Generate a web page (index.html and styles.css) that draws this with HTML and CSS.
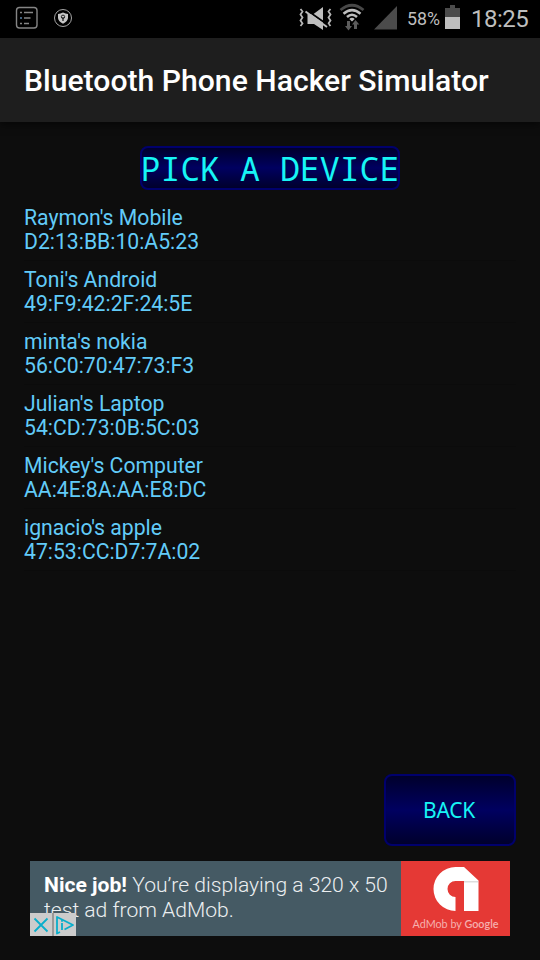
FILE: index.html
```html
<!DOCTYPE html>
<html lang="en">
<head>
<meta charset="UTF-8">
<title>Bluetooth Phone Hacker Simulator</title>
<link rel="stylesheet" href="styles.css">
</head>
<body>
	<div class="statusbar">
		<svg class="ico_list" width="24" height="24" viewBox="0 0 24 24" fill="none" stroke="#858585">
			<rect x="1.5" y="1.5" width="20.5" height="20.5" rx="3" stroke-width="1.4"/>
			<path d="M9 6.500h9M9 12h6.500M9 17.500h5" stroke-width="1.5"/>
			<path d="M5 6.500h2M5 17.500h2" stroke-width="1.5"/>
			<path d="M5 12h2" stroke="#5783ad" stroke-width="1.5"/>
		</svg>
		<svg class="ico_shield" width="20" height="20" viewBox="0 0 20 20">
			<circle cx="10" cy="10" r="8.500" fill="none" stroke="#a5a5a5"/>
			<path d="M10 4.500Q12.500 5.900 15 5.900V10Q14.500 13.500 10 15.800Q5.500 13.500 5 10V5.900Q7.500 5.900 10 4.500Z" fill="#c6c6c6"/>
			<circle cx="10" cy="8.800" r="1.700" fill="none" stroke="#222"/>
			<path d="M10 9v4" stroke="#222" stroke-width="1.300"/>
		</svg>
		<span class="espace"></span>
		<svg class="ico_mute" width="36" height="28" viewBox="0 0 36 28">
			<path d="M2.500 5l2 2.500-2 3 2 3-2 3 2 3-2 2.500M32.500 5l-2 2.500 2 3-2 3 2 3-2 3 2 2.500" fill="none" stroke="#b5b5b5" stroke-width="1.800"/>
			<path d="M9.500 10h6L25 3v23l-9-6H9.500z" fill="#bebebe"/>
			<path d="M10 7L30 21" stroke="#000" stroke-width="1.800"/>
			<path d="M7.500 7.500L29 23" stroke="#bebebe" stroke-width="2"/>
		</svg>
		<svg class="ico_wifi" width="26" height="28" viewBox="0 0 26 28" fill="none">
			<path d="M1.500 7Q13-2.500 24.500 7" stroke="#484848" stroke-width="2.800"/>
			<path d="M4.500 10.700Q13 3.500 21.500 10.700M8 14Q13 9.500 18 14" stroke="#bebebe" stroke-width="2.500"/>
			<path d="M10.300 16Q13 13.500 15.700 16L13 18.500z" fill="#bebebe"/>
			<path d="M8 18h3v5h2l-3.500 4.500L6 23h2zM15 26h3v-4.500h2.300L16.500 17 13 21.500h2z" fill="#5c5c5c"/>
		</svg>
		<svg class="ico_signal" width="24" height="24" viewBox="0 0 24 24"><path d="M0 23.500L23 0v23.500z" fill="#4b4b4b"/></svg>
		<span class="pourcent">58%</span>
		<svg class="ico_batterie" width="15" height="24" viewBox="0 0 15 24">
			<path d="M5 0h5v3h5v9H0V3h5z" fill="#4b4b4b"/>
			<path d="M0 12h15v12H0z" fill="#bebebe"/>
		</svg>
		<span class="heure">18:25</span>
	</div>

	<div class="titre">Bluetooth Phone Hacker Simulator</div>

	<div class="contenu">
		<h1 class="choix">PICK A DEVICE</h1>
		<ul class="liste">
			<li>Raymon's Mobile<br>D2:13:BB:10:A5:23</li>
			<li>Toni's Android<br>49:F9:42:2F:24:5E</li>
			<li>minta's nokia<br>56:C0:70:47:73:F3</li>
			<li>Julian's Laptop<br>54:CD:73:0B:5C:03</li>
			<li>Mickey's Computer<br>AA:4E:8A:AA:E8:DC</li>
			<li>ignacio's apple<br>47:53:CC:D7:7A:02</li>
		</ul>
		<button class="retour">BACK</button>
	</div>

	<div class="pub">
		<p class="pub_texte"><b>Nice job!</b> You’re displaying a 320 x 50<br>test ad from AdMob.</p>
		<div class="pub_logo">
			<svg width="46" height="46" viewBox="0 0 46 46">
				<path d="M22.500 1H31L45.500 14.500V45H31V15H22.500A8 8 0 0 0 22.500 31V45A22 22 0 0 1 22.500 1Z" fill="#fff"/>
				<path d="M31 15h14v1.500H31z" fill="#ddd"/>
			</svg>
			<span>AdMob by <b>Google</b></span>
		</div>
		<div class="pub_badges">
			<svg width="22" height="22" viewBox="0 0 22 22"><path d="M4.500 5l13 13M17.500 5l-13 13" stroke="#09aecb" stroke-width="1.800"/></svg>
			<svg width="22" height="22" viewBox="0 0 22 22" fill="none" stroke="#09aecb" stroke-width="1.800">
				<path d="M6 18.500L3 20V3.500L19 11.500L10.500 16" stroke-linejoin="round"/>
				<path d="M8 9.500v7M8 6.500v1.700"/>
			</svg>
		</div>
	</div>
</body>
</html>
```

FILE: styles.css
```css
html
{
	height : 100%;
}

body
{
	margin : 0;
	height : 960px;
	display : flex;
	flex-direction : column;
	overflow : hidden;
	background : #0d0d0d;
	font-family : Roboto, sans-serif;
}

.statusbar
{
	height : 38px;
	box-sizing : border-box;
	padding : 0 12px 0 15px;
	display : flex;
	align-items : flex-start;
	background : #000;
	color : #bebebe;
	white-space : nowrap;
}

.ico_list
{
	margin : 6px 14px 0 0;
}

.ico_shield
{
	margin-top : 8px;
}

.espace
{
	flex : 1;
}

.ico_mute
{
	margin : 4px 5px 0 0;
}

.ico_wifi
{
	margin : 3px 9px 0 0;
}

.ico_signal
{
	margin : 6px 9px 0 0;
}

.pourcent
{
	width : 38px;
	font-size : 17.8px;
	line-height : 38px;
}

.ico_batterie
{
	margin : 5px 11px 0 0;
}

.heure
{
	width : 57px;
	font-size : 24px;
	letter-spacing : -0.5px;
	line-height : 38px;
}

.titre
{
	height : 84px;
	padding-left : 24px;
	background : #1e1e1e;
	color : #fff;
	font-size : 30.15px;
	font-weight : 500;
	line-height : 85px;
	white-space : nowrap;
	box-shadow : 0 2px 8px rgba(0,0,0,0.6);
}

.contenu
{
	flex : 1;
	padding : 24px 24px 15px;
	display : flex;
	flex-direction : column;
}

.choix, .retour
{
	box-sizing : border-box;
	border : 2px solid #00006c;
	border-radius : 8px;
	background : linear-gradient(to bottom, #00002c, #000060 50%, #00002c);
	color : #17f5f5;
	font-weight : normal;
}

.choix
{
	align-self : center;
	width : 260px;
	height : 44px;
	margin : 0 0 9px;
	display : flex;
	justify-content : center;
	font-family : "Noto Sans Mono", "DejaVu Sans Mono", monospace;
	font-size : 33.2px;
	line-height : 41px;
	white-space : nowrap;
}

.liste
{
	list-style : none;
	margin : 0;
	padding : 0;
	color : #62cbf8;
	font-size : 21.2px;
	line-height : 24px;
}

.liste li
{
	height : 48px;
	padding : 7px 0 6px;
	border-bottom : 1px solid #0b0b0b;
}

.retour
{
	align-self : flex-end;
	margin : auto 0 0;
	width : 132px;
	height : 72px;
	padding : 0 3px 0 1px;
	font-family : "Noto Sans", sans-serif;
	font-size : 21px;
	letter-spacing : -0.2px;
}

.pub
{
	position : relative;
	width : 480px;
	height : 75px;
	margin : 0 30px 24px;
	display : flex;
	background : #455a64;
}

.pub_texte
{
	width : 371px;
	margin : 0;
	padding : 11px 0 0 14px;
	box-sizing : border-box;
	color : #eceff1;
	font-size : 21.1px;
	font-weight : 300;
	line-height : 25px;
	white-space : nowrap;
}

.pub_texte b
{
	font-weight : 700;
	color : #fff;
}

.pub_logo
{
	flex : 1;
	display : flex;
	flex-direction : column;
	align-items : center;
	padding-top : 5px;
	background : #e53935;
}

.pub_logo span
{
	margin-top : 5px;
	color : #f5b0ae;
	font-family : Lato, sans-serif;
	font-size : 10.8px;
	line-height : 14px;
	white-space : nowrap;
}

.pub_logo b
{
	font-weight : 600;
}

/* les deux petits boutons par dessus le texte */
.pub_badges
{
	position : absolute;
	left : 0;
	bottom : 0;
	height : 23px;
	display : flex;
	gap : 2px;
	background : #999;
}

.pub_badges svg
{
	height : 23px;
	background : #ccc;
}
```
